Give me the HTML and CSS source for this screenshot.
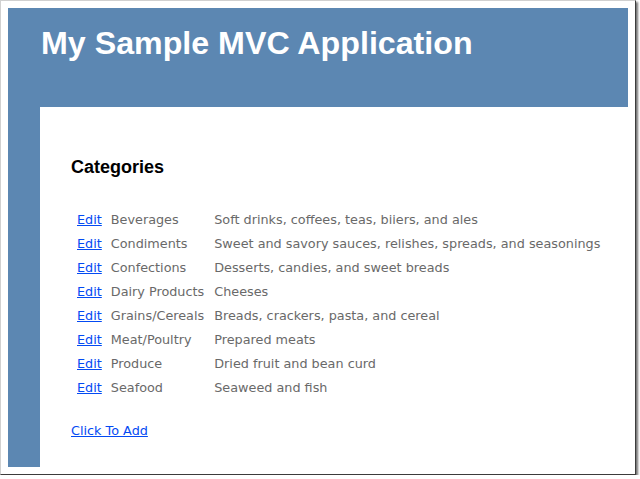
FILE: index.html
```html
<!DOCTYPE html>
<html>
<head>
<meta charset="utf-8">
<title>My Sample MVC Application</title>
<link rel="stylesheet" href="styles.css">
</head>
<body>
<div class="frame">
  <div class="page">
    <div class="header">
      <h1 class="title">My Sample MVC Application</h1>
    </div>
    <div class="main">
      <h2 class="heading">Categories</h2>
      <table class="cats">
        <tr><td><a href="#">Edit</a></td><td>Beverages</td><td>Soft drinks, coffees, teas, biiers, and ales</td></tr>
        <tr><td><a href="#">Edit</a></td><td>Condiments</td><td>Sweet and savory sauces, relishes, spreads, and seasonings</td></tr>
        <tr><td><a href="#">Edit</a></td><td>Confections</td><td>Desserts, candies, and sweet breads</td></tr>
        <tr><td><a href="#">Edit</a></td><td>Dairy Products</td><td>Cheeses</td></tr>
        <tr><td><a href="#">Edit</a></td><td>Grains/Cereals</td><td>Breads, crackers, pasta, and cereal</td></tr>
        <tr><td><a href="#">Edit</a></td><td>Meat/Poultry</td><td>Prepared meats</td></tr>
        <tr><td><a href="#">Edit</a></td><td>Produce</td><td>Dried fruit and bean curd</td></tr>
        <tr><td><a href="#">Edit</a></td><td>Seafood</td><td>Seaweed and fish</td></tr>
      </table>
      <a class="add" href="#">Click To Add</a>
    </div>
  </div>
</div>
</body>
</html>
```
FILE: styles.css
```css
html, body {
  margin: 0;
  padding: 0;
  background: #ffffff;
}
.frame {
  width: 620px;
  height: 459px;
  padding: 7px;
  background: #ffffff;
  border-top: 1px solid #d0d0d0;
  border-left: 1px solid #d0d0d0;
  border-right: 1px solid #3c3c3c;
  border-bottom: 1px solid #3c3c3c;
  box-shadow: 2px 2px 2px rgba(0, 0, 0, 0.55);
}
.page {
  height: 459px;
  background: #5c87b2;
  display: flex;
  flex-direction: column;
}
.header {
  height: 99px;
}
.title {
  margin: 0;
  padding: 16px 0 0 33px;
  font-family: "Liberation Sans", Arial, sans-serif;
  font-weight: bold;
  font-size: 32.2px;
  line-height: 38px;
  color: #ffffff;
}
.main {
  flex: 1;
  margin-left: 32px;
  background: #ffffff;
  padding: 49px 30px 0 31px;
  font-family: "DejaVu Sans", Verdana, sans-serif;
  font-size: 12.8px;
  color: #696969;
}
.heading {
  margin: 0;
  font-family: "Liberation Sans", Arial, sans-serif;
  font-size: 18px;
  line-height: 22px;
  font-weight: bold;
  color: #000000;
}
.cats {
  border-collapse: collapse;
  margin-top: 29px;
}
.cats td {
  padding: 0 5px;
  height: 24px;
  white-space: nowrap;
}
.cats td:first-child {
  padding-left: 6px;
}
.cats td:nth-child(2) {
  padding-left: 4px;
}
a {
  color: #034af3;
  text-decoration: underline;
}
.add {
  display: inline-block;
  margin-top: 24px;
}
```
